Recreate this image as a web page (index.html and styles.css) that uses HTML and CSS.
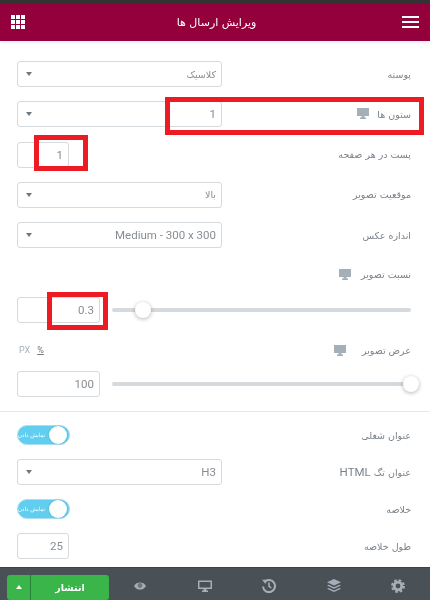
FILE: index.html
```html
<!DOCTYPE html>
<html lang="fa" dir="rtl">
<head>
<meta charset="utf-8">
<title>ویرایش ارسال ها</title>
<link rel="stylesheet" href="styles.css">
</head>
<body>
<div class="topline"></div>
<header class="header">
  <svg class="hamburger" width="17" height="12" viewBox="0 0 17 12"><path d="M0 1h17M0 6h17M0 11h17" stroke="#fff" stroke-width="2"/></svg>
  <span class="header-title">ویرایش ارسال ها</span>
  <svg class="apps" width="14" height="14" viewBox="0 0 14 14" fill="#fff"><path d="M0 0h4v4H0zM5 0h4v4H5zM10 0h4v4h-4zM0 5h4v4H0zM5 5h4v4H5zM10 5h4v4h-4zM0 10h4v4H0zM5 10h4v4H5zM10 10h4v4h-4z"/></svg>
</header>
<main class="panel">
  <section class="group group-a">
    <div class="row"><label class="label">پوسته</label><div class="select"><span>کلاسیک</span><i class="caret"></i></div></div>
    <div class="row">
      <label class="label">ستون ها</label>
      <svg class="monitor monitor-columns" width="12" height="11" viewBox="0 0 12 11"><path d="M0 0h12v8H7.5v1.5H9V11H3V9.500h1.500V8H0z" fill="#a4afb7"/></svg>
      <div class="select"><span class="num">1</span><i class="caret"></i></div>
      <div class="mark mark-columns"></div>
    </div>
    <div class="row">
      <label class="label">پست در هر صفحه</label>
      <div class="input input-small"><span class="num">1</span></div>
      <div class="mark mark-posts"></div>
    </div>
    <div class="row"><label class="label">موقعیت تصویر</label><div class="select"><span>بالا</span><i class="caret"></i></div></div>
    <div class="row"><label class="label">اندازه عکس</label><div class="select"><span class="num">Medium - 300 x 300</span><i class="caret"></i></div></div>
  </section>

  <section class="group-b">
    <div class="caption caption-ratio">
      <label class="label">نسبت تصویر</label>
      <svg class="monitor" width="12" height="11" viewBox="0 0 12 11"><path d="M0 0h12v8H7.500v1.500H9V11H3V9.500h1.500V8H0z" fill="#a4afb7"/></svg>
    </div>
    <div class="row slider-row">
      <div class="slider"><i class="thumb thumb-ratio"></i></div>
      <div class="input input-wide"><span class="num">0.3</span></div>
      <div class="mark mark-ratio"></div>
    </div>
    <div class="caption caption-width">
      <label class="label">عرض تصویر</label>
      <svg class="monitor" width="12" height="11" viewBox="0 0 12 11"><path d="M0 0h12v8H7.500v1.500H9V11H3V9.500h1.500V8H0z" fill="#a4afb7"/></svg>
      <span class="units"><u>%</u><span>PX</span></span>
    </div>
    <div class="row slider-row slider-row-width">
      <div class="slider"><i class="thumb thumb-width"></i></div>
      <div class="input input-wide"><span class="num">100</span></div>
    </div>
  </section>

  <section class="group group-c">
    <div class="row"><label class="label">عنوان شغلی</label><div class="toggle"><i class="knob"></i><span>نمایش دادن</span></div></div>
    <div class="row"><label class="label">عنوان تگ <span class="latin">HTML</span></label><div class="select"><span class="num">H3</span><i class="caret"></i></div></div>
    <div class="row"><label class="label">خلاصه</label><div class="toggle"><i class="knob"></i><span>نمایش دادن</span></div></div>
    <div class="row"><label class="label">طول خلاصه</label><div class="input input-small"><span class="num">25</span></div></div>
  </section>
</main>
<footer class="footer">
  <svg class="tool" width="14" height="14" viewBox="0 0 14 14"><circle cx="7" cy="7" r="3.800" fill="none" stroke="#a4afb7" stroke-width="2.800"/><circle cx="7" cy="7" r="5.900" fill="none" stroke="#a4afb7" stroke-width="2" stroke-dasharray="2.600 2.030"/></svg>
  <svg class="tool" width="14" height="14" viewBox="0 0 14 14" fill="#a4afb7"><path d="M7 0l7 3.200L7 6.400 0 3.200z"/><path d="M1.600 5.700L7 8.200l5.400-2.500L14 6.500 7 9.700 0 6.500z"/><path d="M1.600 9L7 11.500 12.400 9l1.600.8L7 13 0 9.800z"/></svg>
  <svg class="tool" width="14" height="14" viewBox="0 0 14 14" fill="none" stroke="#a4afb7"><path d="M2.400 3.200A6 6 0 1 1 1 7.500" stroke-width="2"/><path d="M0 0.700l4.700 0-1 4.300z" fill="#a4afb7" stroke="none"/><path d="M7 3.600v3.800l2.300 1.500" stroke-width="1.600"/></svg>
  <svg class="tool" width="14" height="14" viewBox="0 0 14 14" fill="#a4afb7"><path d="M0 1.500h14v8.500H8.500v1.500H10V13H4v-1.500h1.500V10H0zM1.500 3v5.500h11V3z" fill-rule="evenodd"/></svg>
  <svg class="tool tool-last" width="14" height="14" viewBox="0 0 14 14" fill="#a4afb7"><path d="M1 7c1.500-2.500 3.400-3.600 6-3.600s4.500 1.100 6 3.600c-1.500 2.500-3.400 3.600-6 3.600S2.500 9.500 1 7z"/><circle cx="7" cy="6.500" r="2.400" fill="#6e777d"/></svg>
  <div class="publish"><span class="publish-label">انتشار</span><span class="publish-more"><i class="caret-up"></i></span></div>
</footer>
</body>
</html>
```
FILE: styles.css
```css
* { box-sizing: border-box; }
html, body { margin: 0; padding: 0; }
html { background: #fff; }
body {
  width: 430px;
  height: 600px;
  overflow: hidden;
  display: flex;
  flex-direction: column;
  background: #fff;
  font-family: "DejaVu Sans", Roboto, sans-serif;
  color: #6d7882;
  filter: blur(.35px);
}
.topline { height: 3px; background: #333; flex: none; }
.header {
  flex: none;
  height: 38px;
  background: #93003c;
  display: flex;
  align-items: center;
  justify-content: space-between;
  padding: 0 11px;
  box-shadow: 0 2px 3px rgba(0, 0, 0, .08);
  color: #fff;
  position: relative;
}
.hamburger { flex: none; }
.apps { flex: none; }
.header-title { font-size: 11px; position: relative; left: 3px; }
.panel { flex: 1; min-height: 0; padding: 20px 19px 0 17px; }
.group { display: flex; flex-direction: column; }
.group-a { gap: 14.25px; }
.group-c { gap: 11px; padding-top: 10px; }
.group-b { padding: 19px 19px 14px 17px; border-bottom: 1px solid #e6e9ec; margin: 0 -19px 0 -17px; }
.row { height: 26px; display: flex; align-items: center; justify-content: space-between; position: relative; }
.label { font-size: 9.5px; color: #7a838b; white-space: nowrap; }
.latin { font-family: Roboto, sans-serif; font-size: 11.5px; }
.num { font-family: Roboto, sans-serif; font-size: 11.5px; }
.select, .input {
  height: 26px;
  border: 1px solid #d5dadf;
  border-radius: 3px;
  background: #fff;
  color: #878d93;
  display: flex;
  align-items: center;
  font-size: 9.5px;
}
.select { width: 205px; justify-content: space-between; padding: 0 5px 0 8px; }
.input { padding: 0 5px; }
.input-small { width: 52px; }
.input-wide { width: 83px; flex: none; }
.caret { width: 0; height: 0; border-style: solid; border-width: 4px 3.500px 0; border-color: #6d7882 transparent transparent; }
.monitor { flex: none; }
.monitor-columns { position: absolute; right: 42px; top: 7px; }
.mark { position: absolute; border: 5px solid #ed1c24; pointer-events: none; }
.mark-columns { left: 148px; top: -4px; width: 259px; height: 38px; }
.mark-posts { left: 17px; top: -7px; width: 54px; height: 36px; }
.mark-ratio { left: 30px; top: -5px; width: 61px; height: 38px; }
.caption { height: 14px; display: flex; align-items: center; gap: 10px; position: relative; }
.caption-width { margin-top: 20px; gap: 16px; }
.units { position: absolute; left: 2px; top: 2px; display: flex; gap: 7px; font: 9px Roboto, sans-serif; color: #a4afb7; }
.units u { color: #6d7882; }
.slider-row { margin-top: 16px; gap: 12px; }
.slider-row-width { margin-top: 14px; }
.slider { flex: 1; height: 4px; background: #d5dadf; border-radius: 2px; position: relative; }
.thumb { position: absolute; top: -6.500px; width: 16px; height: 16px; border-radius: 50%; background: #fff; box-shadow: 0 1px 4px rgba(0, 0, 0, .3); }
.thumb-ratio { left: 23px; }
.thumb-width { right: -8px; }
.toggle {
  width: 53px;
  height: 20px;
  border-radius: 10px;
  background: #61cef0;
  border: 1px solid #a9dff0;
  display: flex;
  align-items: center;
  justify-content: space-between;
  color: #fff;
  font-size: 5.500px;
  padding: 0 3px 0 0;
  white-space: nowrap;
}
.knob { width: 18px; height: 18px; border-radius: 50%; background: #fff; flex: none; margin-right: -1px; box-shadow: 0 0 2px rgba(0, 0, 0, .2); }
.footer {
  flex: none;
  height: 33px;
  background: #495157;
  border-top: 1px solid #3e454a;
  display: flex;
  align-items: center;
  padding: 6px 25px 0 7px;
  color: #fff;
}
.footer .tool { flex: none; margin-left: 50.500px; margin-top: -3px; }
.footer .tool-last { margin-left: 0; }
.publish {
  flex: none;
  width: 102px;
  height: 25px;
  border-radius: 3px;
  background: #39b54a;
  display: flex;
  font-size: 9.500px;
  font-weight: bold;
  margin-right: auto;
}
.publish-label { flex: 1; display: flex; align-items: center; justify-content: center; }
.publish-more { width: 24px; border-right: 1px solid #2a7f36; display: flex; align-items: center; justify-content: center; }
.caret-up { width: 0; height: 0; border-style: solid; border-width: 0 3.500px 4px; border-color: transparent transparent #fff; }
```
